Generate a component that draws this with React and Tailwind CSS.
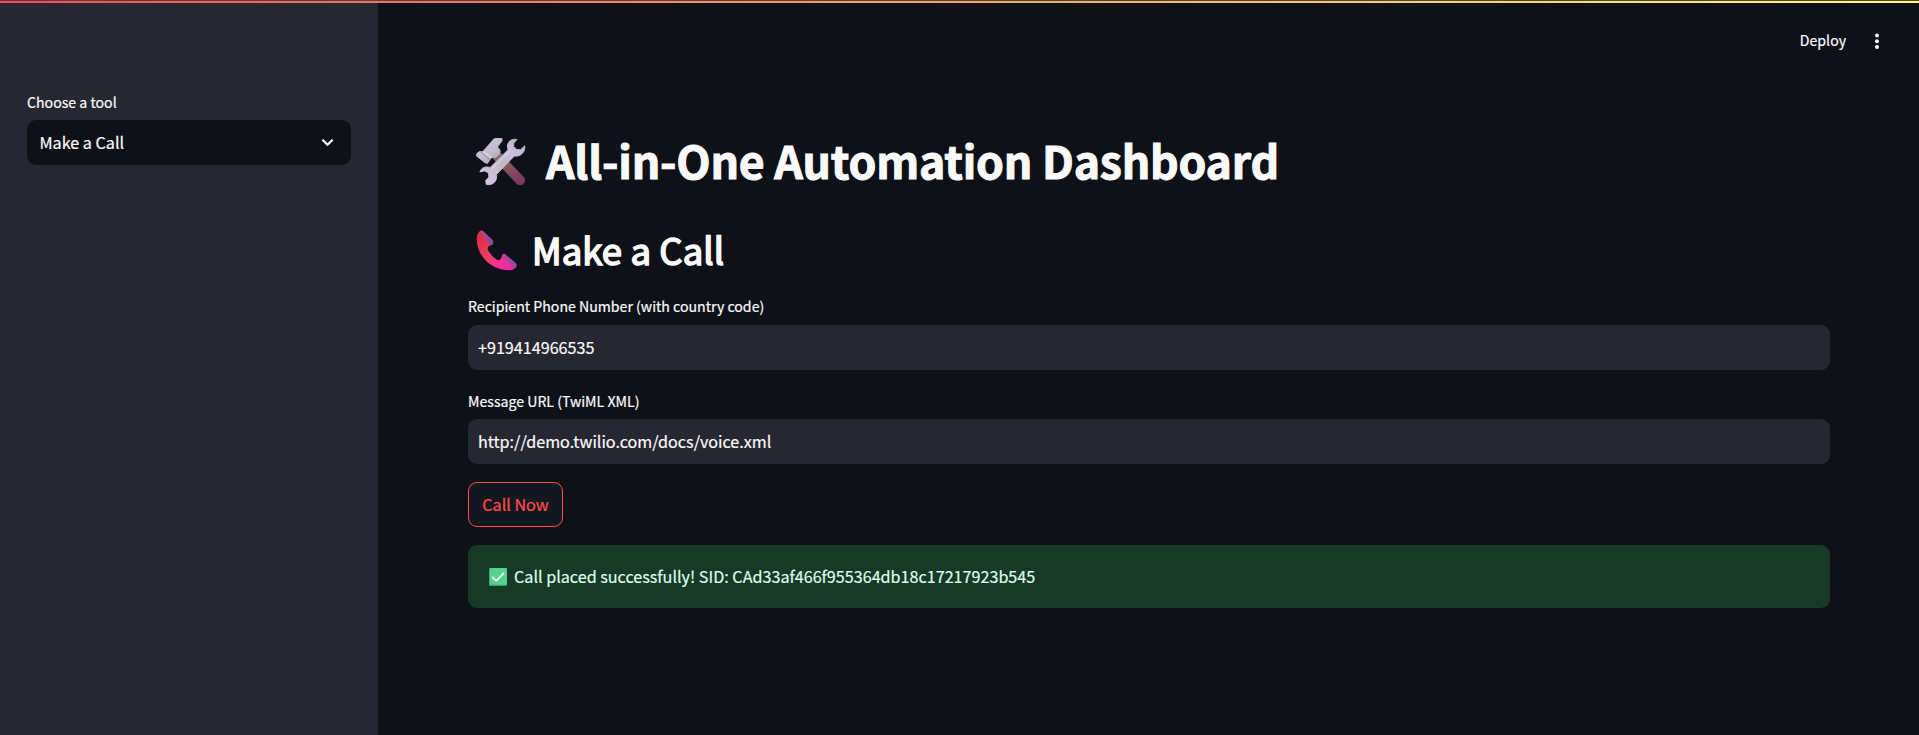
const FONT = "font-['Noto_Sans_CJK_SC','Noto_Sans_CJK_JP',sans-serif]";

function ToolsIcon() {
  return (
    <svg className="mt-0.5 h-[49px] w-[51px] shrink-0" viewBox="0 0 50 48" fill="none">
      <defs>
        <linearGradient id="handle" x1="20" y1="16" x2="46" y2="46" gradientUnits="userSpaceOnUse">
          <stop stopColor="#8d6a62" />
          <stop offset=".55" stopColor="#83505a" />
          <stop offset="1" stopColor="#7b3468" />
        </linearGradient>
        <linearGradient id="head" x1="6" y1="4" x2="20" y2="26" gradientUnits="userSpaceOnUse">
          <stop stopColor="#cfc5dc" />
          <stop offset=".6" stopColor="#bfbac9" />
          <stop offset="1" stopColor="#a9a5b5" />
        </linearGradient>
        <linearGradient id="wrench" x1="44" y1="4" x2="8" y2="46" gradientUnits="userSpaceOnUse">
          <stop stopColor="#b9b4c4" />
          <stop offset=".25" stopColor="#cdbfdd" />
          <stop offset=".5" stopColor="#bdbac6" />
          <stop offset="1" stopColor="#d8c4ea" />
        </linearGradient>
      </defs>
      <path d="M22 19L44.3 42.6" stroke="url(#handle)" strokeWidth="9.6" strokeLinecap="round" />
      <path d="M18.5 1.5C20 .9 24 .9 27 1.2L26.8 4L22.5 9.5L25.3 13.5L24 17.5L20 20.5L16.5 20.2L12.3 26.5L9.5 25.5L1 18.5L1.5 16L4.5 13.8L7.5 14Z" fill="url(#head)" />
      <path d="M5 14L15 22.5" stroke="#8f8b9e" strokeWidth=".9" />
      <path d="M8 14.5L17 20.5" stroke="#dcd7e4" strokeWidth="1.2" />
      <path d="M41.2 2.5C37.5 1.4 33.2 3.2 32 7.4C31.6 9.3 31.9 11 32.4 12.5L14.8 30C10.5 28.2 6 30.1 4.8 34.2L9.5 33.2L13.3 35.2L13.6 39.5L10.5 42.6L11 46.4C16.5 48 22.5 43.5 21 36.8L38.6 18.6C43.8 19.6 49.5 15.5 48.9 8.6L44.5 12.6L40.5 12L37.9 9.2L38 5.9Z" fill="url(#wrench)" stroke="url(#wrench)" strokeWidth=".9" strokeLinejoin="round" />
      <path d="M34 13.8L16 31.8" stroke="#dddae3" strokeWidth="1.2" opacity=".7" />
    </svg>
  );
}

function PhoneIcon() {
  return (
    <svg className="mt-0.5 h-[41px] w-[41px] shrink-0" viewBox="0 0 41 41" fill="none">
      <defs>
        <linearGradient id="body" x1="3" y1="6" x2="37" y2="39" gradientUnits="userSpaceOnUse">
          <stop stopColor="#dc2d44" />
          <stop offset=".45" stopColor="#f33b62" />
          <stop offset=".72" stopColor="#f0309a" />
          <stop offset="1" stopColor="#e32aa4" />
        </linearGradient>
        <linearGradient id="pad" x1="0" y1="0" x2="1" y2="1">
          <stop stopColor="#bb4795" />
          <stop offset="1" stopColor="#87499f" />
        </linearGradient>
      </defs>
      <path d="M4.5 .8C2 2 .6 5.5 .7 9.5C1 25 14 40.2 33.5 40.3C37.5 40.3 39.7 38.5 40.2 35.5L26.5 25.5L24.3 29.6C23.5 30.6 21.8 30.4 20.6 29.6C16.8 27 13.5 23.2 11.8 19.6C11.3 18 11.7 16.6 13 15.9L16 14.5Z" fill="url(#body)" />
      <path d="M3.8 1.2C5 .2 6.4 .4 7.6 1.5L16.6 10C17.6 11.2 17.4 14.5 16 15L14.3 15.2Z" fill="url(#pad)" />
      <path d="M25.7 26.5C25.6 24.5 27.5 23 29.2 24.3L39.3 32.4C41.2 34 41.2 36.4 39.6 38.2Z" fill="url(#pad)" />
    </svg>
  );
}

function CheckIcon() {
  return (
    <svg className="h-[18px] w-[18px] shrink-0" viewBox="0 0 18 18" fill="none">
      <rect width="18" height="18" rx="1.2" fill="#3fa36b" />
      <rect x=".8" width="17.2" height="16.8" rx="1" fill="#56d08a" />
      <path d="M3.6 9.4L7.2 12.9L14.6 5.3" stroke="#fff" strokeWidth="1.7" strokeLinecap="round" strokeLinejoin="round" />
    </svg>
  );
}

function Label({ children }) {
  return <div className="h-6 whitespace-nowrap text-[14.13px] leading-6">{children}</div>;
}

function Field({ value }) {
  return (
    <div className="flex h-[45px] items-center rounded-[9px] bg-[#262730] px-[10px] text-[16.15px] leading-[45px]">
      <span>{value}</span>
    </div>
  );
}

export default function App() {
  return (
    <div className={`flex h-[735px] w-full flex-col overflow-hidden bg-[#0e1117] text-[#fafafa] [-webkit-text-stroke:0.2px] ${FONT}`}>
      <div className="h-px shrink-0 bg-[#46464b]" />
      <div className="h-0.5 shrink-0 bg-linear-to-r/srgb from-[#ff4b4b] to-[#fffd80]" />
      <div className="flex min-h-0 flex-1">
        <aside className="w-[378px] shrink-0 bg-[#262730] pt-[87px] pr-[27px] pl-[27px]">
          <Label>Choose a tool</Label>
          <div className="mt-1.5 flex h-[45px] items-center justify-between rounded-[9px] bg-[#0e1117] pr-[17px] pl-[12.5px] text-[16.15px] leading-[45px]">
            <span>Make a Call</span>
            <svg className="h-[13px] w-[13px]" viewBox="0 0 13 13" fill="none">
              <path d="M1.4 3.7L6.5 8.8L11.6 3.7" stroke="#fafafa" strokeWidth="2.2" />
            </svg>
          </div>
        </aside>
        <main className="flex min-w-0 flex-1 flex-col">
          <header className="flex h-[76px] items-center justify-end gap-[29px] pr-10">
            <span className="-mt-0.5 text-[14.13px] leading-6">Deploy</span>
            <svg className="h-[18px] w-1" viewBox="0 0 4 18" fill="#fafafa">
              <circle cx="2" cy="3.5" r="2" />
              <circle cx="2" cy="9.2" r="2" />
              <circle cx="2" cy="14.9" r="2" />
            </svg>
          </header>
          <div className="flex flex-col pt-[51px] pr-[89px] pl-[90px]">
            <h1 className="flex h-[60px] items-center gap-[20px] pl-[7px] text-[44.6px] leading-[60px] font-bold tracking-[-0.22px] whitespace-nowrap [-webkit-text-stroke:1px]">
              <ToolsIcon />
              <span>All-in-One Automation Dashboard</span>
            </h1>
            <h2 className="mt-[35px] flex h-12 items-center gap-[15px] pl-2 text-[36.5px] leading-[48px] font-normal tracking-[0.08px] whitespace-nowrap [-webkit-text-stroke:1.6px]">
              <PhoneIcon />
              <span className="pt-0.5">Make a Call</span>
            </h2>
            <div className="mt-[21px] flex flex-col gap-[7px]">
              <Label>Recipient Phone Number (with country code)</Label>
              <Field value="+919414966535" />
            </div>
            <div className="mt-[19px] flex flex-col gap-1.5">
              <Label>Message URL (TwiML XML)</Label>
              <Field value="http://demo.twilio.com/docs/voice.xml" />
            </div>
            <button className="mt-[18px] flex h-[45px] w-[95px] items-center justify-center rounded-[9px] border border-[#ff4b4b] bg-[#131720] text-[16.15px] whitespace-nowrap text-[#ff4b4b]">
              Call Now
            </button>
            <div className="mt-[18px] flex h-[63px] items-center gap-[7px] rounded-[9px] bg-[#173928] pl-[21px] text-[16.15px] text-[#dffde9]">
              <CheckIcon />
              <span>Call placed successfully! SID: CAd33af466f955364db18c17217923b545</span>
            </div>
          </div>
        </main>
      </div>
    </div>
  );
}
